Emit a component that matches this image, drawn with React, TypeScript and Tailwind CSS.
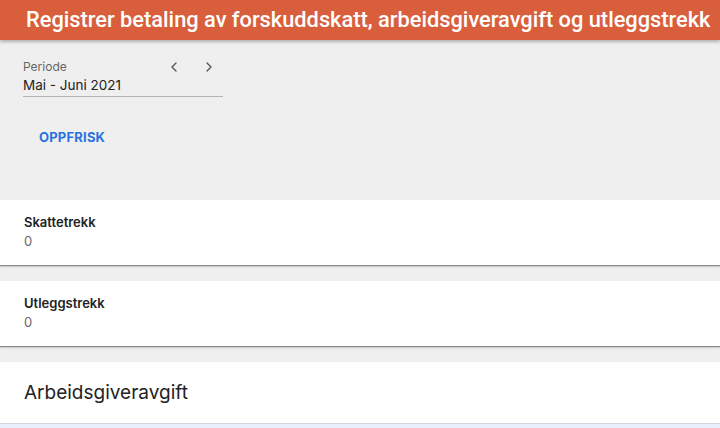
import { ChevronLeft, ChevronRight } from "lucide-react";

function Card({ label, value }: { label: string; value: string }) {
  return (
    <div className="bg-white px-6 pt-[13px] pb-[15px] shadow-[0_1px_1px_rgba(0,0,0,0.35),0_2px_2px_rgba(0,0,0,0.12)]">
      <div className="text-[13px] font-semibold leading-[18px] text-[#222]">{label}</div>
      <div className="mt-[1px] text-[13px] leading-[18px] text-[#666]">{value}</div>
    </div>
  );
}

export default function App() {
  return (
    <div className="h-[428px] w-[720px] overflow-hidden bg-[#efefef] font-['Inter',sans-serif]">
      <header className="relative z-10 flex h-10 items-center bg-[#d95f3c] pl-[26px] shadow-[0_2px_3px_rgba(0,0,0,0.25)]">
        <h1 className="whitespace-nowrap font-['Roboto',sans-serif] text-[21.8px] font-medium text-white">
          Registrer betaling av forskuddskatt, arbeidsgiveravgift og utleggstrekk
        </h1>
      </header>

      <div className="px-[23px] pt-[19px]">
        <div className="w-[200px]">
          <div className="flex items-center justify-between">
            <span className="text-[12px] leading-[16px] text-[#666]">Periode</span>
            <div className="mr-[6px] flex items-center gap-[19px] text-[#555]">
              <ChevronLeft size={16} strokeWidth={2} />
              <ChevronRight size={16} strokeWidth={2} />
            </div>
          </div>
          <div className="mt-[1px] border-b border-[#b5b5b5] pb-[2px] text-[13.5px] leading-[18px] text-[#222]">
            Mai - Juni 2021
          </div>
        </div>
        <div className="mt-[31px] pl-[16px] text-[13px] font-bold tracking-[0.2px] text-[#2a72e0]">
          OPPFRISK
        </div>
      </div>

      <div className="mt-[52px] flex flex-col gap-4">
        <Card label="Skattetrekk" value="0" />
        <Card label="Utleggstrekk" value="0" />
        <div>
          <div className="flex h-[61px] items-center bg-white px-6 pt-[2px]">
            <span className="text-[19px] text-[#222]">Arbeidsgiveravgift</span>
          </div>
          <div className="h-[10px] border-t border-[#cfd6de] bg-[#e8f1fb]" />
        </div>
      </div>
    </div>
  );
}
